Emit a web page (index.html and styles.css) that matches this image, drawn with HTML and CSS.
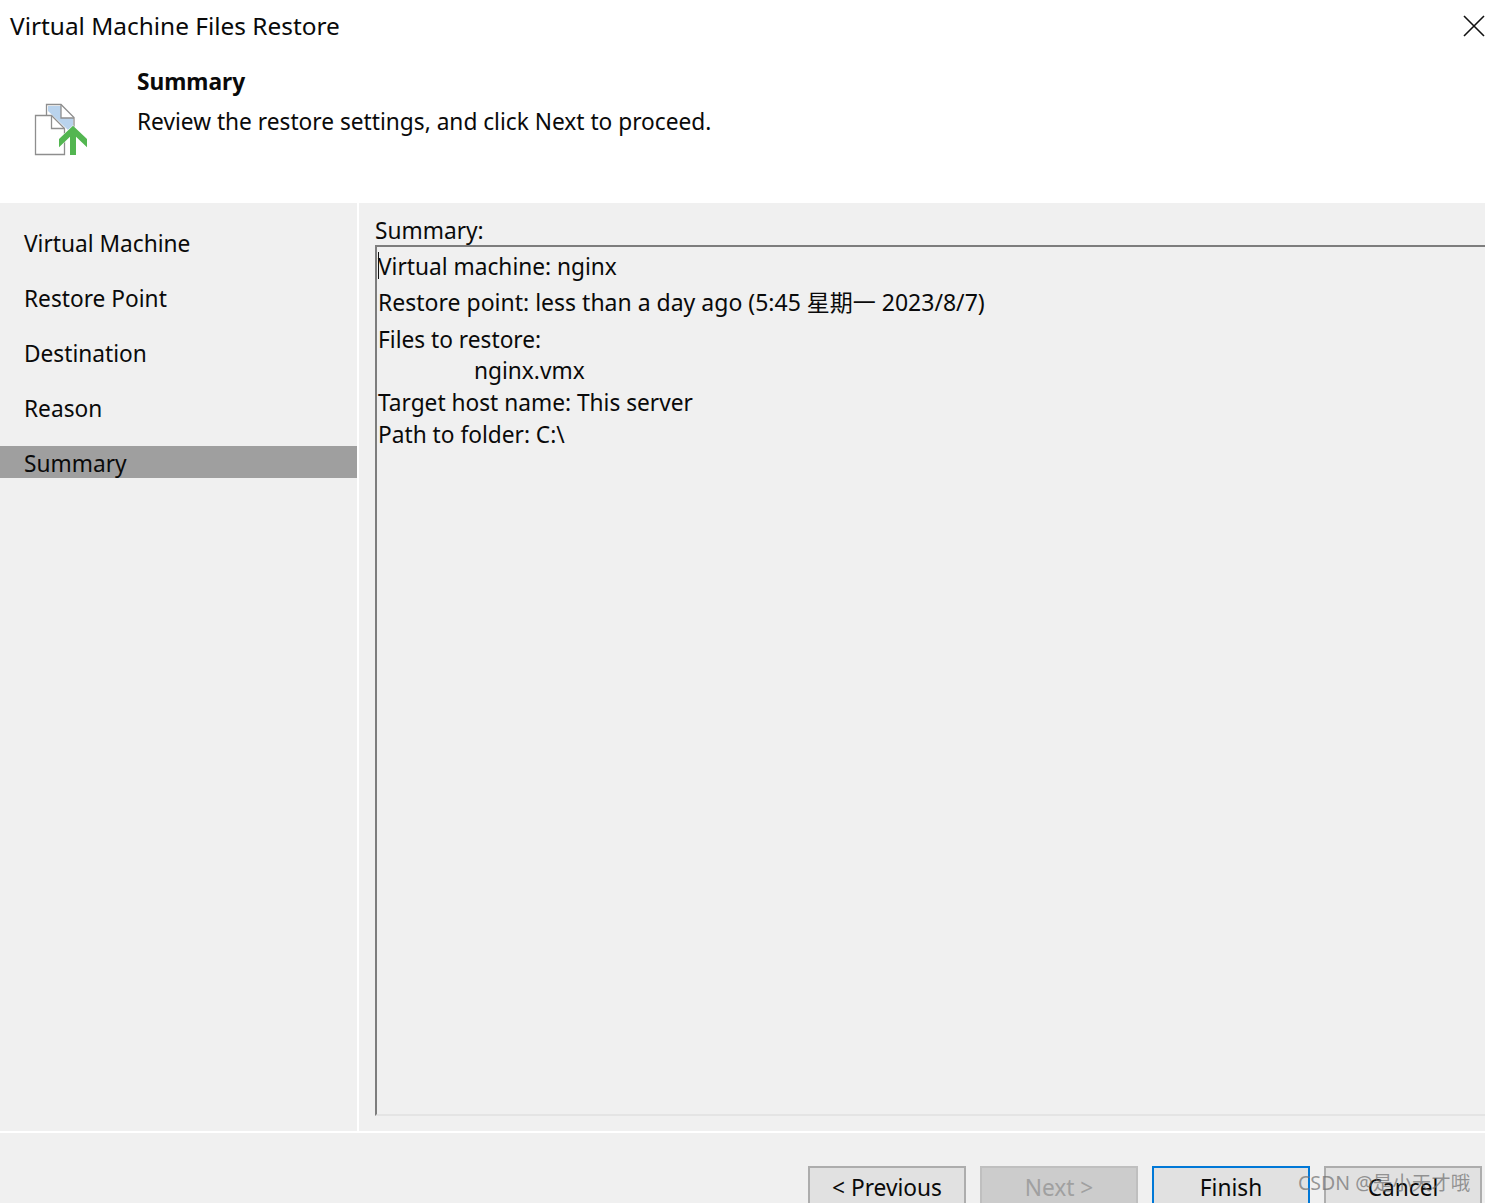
FILE: index.html
```html
<!DOCTYPE html>
<html lang="en">
<head>
<meta charset="utf-8">
<title>Virtual Machine Files Restore</title>
<link rel="stylesheet" href="styles.css">
</head>
<body>
<div class="window">
  <header class="header">
    <div class="titlebar">
      <span class="title">Virtual Machine Files Restore</span>
      <svg class="close" width="22" height="22" viewBox="0 0 22 22"><path d="M1 1 L21 21 M21 1 L1 21" stroke="#111" stroke-width="1.6" fill="none"/></svg>
    </div>
    <div class="intro">
      <svg class="logo" width="60" height="57" viewBox="0 0 60 57">
        <path d="M12.500 18 V5.500 H27 L40 18.500 V28" fill="#fff" stroke="#8e8e8e" stroke-width="1.300"/>
        <path d="M14 7 H27 V19 H39 V27 L34 31 L14 12 Z" fill="#b9d3ed"/>
        <path d="M27 5.500 V19 H40" fill="none" stroke="#8e8e8e" stroke-width="1.300"/>
        <path d="M1.500 16.500 H17.500 L30.500 29.500 V55.500 H1.500 Z" fill="#fff" stroke="#8e8e8e" stroke-width="1.300"/>
        <path d="M17.500 16.500 V29.500 H30.500" fill="none" stroke="#8e8e8e" stroke-width="1.300"/>
        <path class="arrow" d="M39 26.700 L53 40 V48.300 L42 37.700 V56 H36 V37.700 L25 48.300 V40 Z"/>
      </svg>
      <div class="intro-text">
        <div class="intro-heading">Summary</div>
        <div class="intro-desc">Review the restore settings, and click Next to proceed.</div>
      </div>
    </div>
  </header>
  <main class="body">
    <nav class="steps">
      <div class="step">Virtual Machine</div>
      <div class="step">Restore Point</div>
      <div class="step">Destination</div>
      <div class="step">Reason</div>
      <div class="step current">Summary</div>
    </nav>
    <section class="content">
      <div class="summary-label">Summary:</div>
      <div class="summary-box">
        <div class="caret"></div>
        <div class="line first">Virtual machine: nginx</div>
        <div class="line second">Restore point: less than a day ago (5:45 星期一 2023/8/7)</div>
        <div class="line third">Files to restore:</div>
        <div class="line indent">nginx.vmx</div>
        <div class="line">Target host name: This server</div>
        <div class="line">Path to folder: C:\</div>
      </div>
    </section>
  </main>
  <footer class="footer">
    <button class="btn">&lt; Previous</button>
    <button class="btn disabled">Next &gt;</button>
    <button class="btn primary">Finish</button>
    <button class="btn">Cancel</button>
  </footer>
  <div class="watermark">CSDN @是小天才哦</div>
</div>
</body>
</html>
```
FILE: styles.css
```css
* { box-sizing: border-box; }
html, body { margin: 0; padding: 0; }
body {
  font-family: "Noto Sans", "Noto Sans CJK SC", sans-serif;
  font-size: 22.7px;
  color: #0a0a0a;
  background: #fff;
}
.window {
  position: relative;
  width: 1485px;
  height: 1203px;
  overflow: hidden;
  display: flex;
  flex-direction: column;
}
.header { height: 203px; background: #fff; flex: none; }
.titlebar {
  display: flex;
  justify-content: space-between;
  align-items: center;
  height: 52px;
  padding-left: 10px;
}
.title { font-size: 24.4px; line-height: 52px; }
.intro { display: flex; }
.logo { margin-left: 34px; margin-top: 47px; flex: none; }
.arrow { fill: #53b651; stroke: #fff; stroke-width: 1px; paint-order: stroke; }
.intro-text { margin-left: 43px; margin-top: 12px; }
.intro-heading { font-weight: 700; line-height: 35px; }
.intro-desc { line-height: 46px; }
.body { display: flex; height: 930px; flex: none; background: #f0f0f0; border-bottom: 2px solid #fff; }
.steps { width: 359px; flex: none; border-right: 2px solid #fff; padding-top: 13px; }
.step { height: 55px; line-height: 55px; padding-left: 24px; }
.step.current { height: 32px; line-height: 36px; margin-top: 10px; background: #9f9f9f; }
.content { flex: 1; padding-left: 16px; min-width: 0; display: flex; flex-direction: column; }
.summary-label { height: 42px; line-height: 55px; }
.summary-box {
  position: relative;
  height: 871px;
  border-top: 2px solid #7d7d7d;
  border-left: 2px solid #7d7d7d;
  border-bottom: 2px solid #e4e4e4;
  padding-top: 1px;
  padding-left: 1px;
}
.caret { position: absolute; left: 1px; top: 5px; height: 27px; border-left: 1px solid #111; }
.line { height: 32px; line-height: 32px; white-space: nowrap; }
.line.first { height: 36px; line-height: 37px; }
.line.second { height: 37px; line-height: 37px; font-size: 23px; }
.line.third { height: 34px; line-height: 37px; }
.line.indent { padding-left: 96px; }
.footer {
  flex: 1;
  background: #f0f0f0;
  display: flex;
  gap: 14px;
  padding-left: 808px;
  padding-top: 33px;
}
.btn {
  width: 158px;
  height: 44px;
  font: inherit;
  color: #0a0a0a;
  background: #e1e1e1;
  border: 2px solid #adadad;
  padding: 0;
  display: block;
  line-height: 40px;
  text-align: center;
  flex: none;
}
.btn.disabled { background: #cccccc; border-color: #bfbfbf; color: #a0a0a0; }
.btn.primary { border-color: #0078d7; }
.watermark {
  position: absolute;
  left: 1298px;
  top: 1169px;
  font-size: 19.5px;
  line-height: 28px;
  color: rgba(110, 110, 110, 0.7);
  white-space: nowrap;
}
```
